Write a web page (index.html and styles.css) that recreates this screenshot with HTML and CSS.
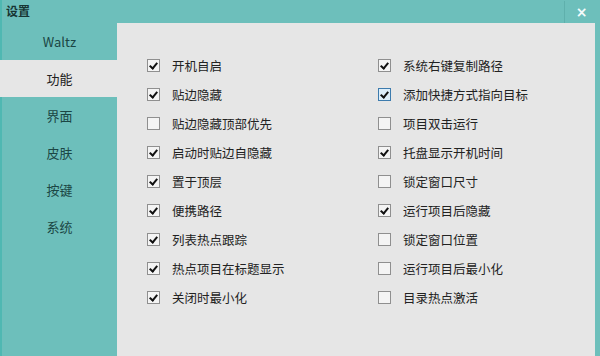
FILE: index.html
```html
<!DOCTYPE html>
<html>
<head>
<meta charset="utf-8">
<link rel="stylesheet" href="styles.css">
</head>
<body>
<div class="window">
  <div class="titlebar">
    <span class="title">设置</span>
    <span class="close">&times;</span>
  </div>
  <div class="main">
    <div class="sidebar">
      <div class="nav-item">Waltz</div>
      <div class="nav-item active">功能</div>
      <div class="nav-item">界面</div>
      <div class="nav-item">皮肤</div>
      <div class="nav-item">按键</div>
      <div class="nav-item">系统</div>
    </div>
    <div class="panel">
      <div class="options">
        <label class="opt"><span class="box checked"></span>开机自启</label>
        <label class="opt"><span class="box checked"></span>系统右键复制路径</label>
        <label class="opt"><span class="box checked"></span>贴边隐藏</label>
        <label class="opt"><span class="box checked hover"></span>添加快捷方式指向目标</label>
        <label class="opt"><span class="box"></span>贴边隐藏顶部优先</label>
        <label class="opt"><span class="box"></span>项目双击运行</label>
        <label class="opt"><span class="box checked"></span>启动时贴边自隐藏</label>
        <label class="opt"><span class="box checked"></span>托盘显示开机时间</label>
        <label class="opt"><span class="box checked"></span>置于顶层</label>
        <label class="opt"><span class="box"></span>锁定窗口尺寸</label>
        <label class="opt"><span class="box checked"></span>便携路径</label>
        <label class="opt"><span class="box checked"></span>运行项目后隐藏</label>
        <label class="opt"><span class="box checked"></span>列表热点跟踪</label>
        <label class="opt"><span class="box"></span>锁定窗口位置</label>
        <label class="opt"><span class="box checked"></span>热点项目在标题显示</label>
        <label class="opt"><span class="box"></span>运行项目后最小化</label>
        <label class="opt"><span class="box checked"></span>关闭时最小化</label>
        <label class="opt"><span class="box"></span>目录热点激活</label>
      </div>
    </div>
  </div>
</div>
</body>
</html>
```
FILE: styles.css
```css
html, body { margin: 0; padding: 0; }
body { width: 600px; height: 356px; overflow: hidden; font-family: "Noto Sans CJK SC", "Noto Sans", sans-serif; font-size: 12px; }
.window { width: 600px; height: 356px; background: #6dbfbb; border-left: 2px solid #4fb8b2; box-sizing: border-box; display: flex; flex-direction: column; }
.titlebar { height: 23px; display: flex; align-items: center; justify-content: space-between; flex-shrink: 0; }
.title { font-weight: bold; color: #173533; padding-left: 4px; font-size: 12px; line-height: 1; margin-top: -1px; }
.close { width: 36px; height: 22px; border-left: 1px solid #5fb0ac; color: #f4fbfb; font-weight: bold; font-size: 14px; font-family: "DejaVu Sans", sans-serif; display: flex; align-items: center; justify-content: center; line-height: 1; padding-right: 2px; box-sizing: border-box; }
.main { flex: 1; display: flex; }
.sidebar { width: 115px; flex-shrink: 0; }
.nav-item { height: 37px; display: flex; align-items: center; justify-content: center; color: #1b4644; font-size: 13px; }
.nav-item.active { background: #e6e6e6; color: #222; margin-left: -2px; padding-left: 2px; }
.panel { flex: 1; background: #e6e6e6; margin-right: 5px; padding: 28px 0 0 30px; }
.options { display: grid; grid-template-columns: 231px 1fr; grid-auto-rows: 29px; }
.opt { display: flex; align-items: center; color: #222; font-size: 12.5px; }
.box { width: 11px; height: 11px; border: 1px solid #8f8f8f; background: #f4f4f4; margin-right: 12px; position: relative; flex-shrink: 0; }
.box.hover { border-color: #3d7bad; background: #ddeefa; }
.box.checked::after { content: ""; position: absolute; left: 3px; top: 1px; width: 3px; height: 6px; border: solid #111; border-width: 0 2px 2px 0; transform: rotate(40deg); }
```
